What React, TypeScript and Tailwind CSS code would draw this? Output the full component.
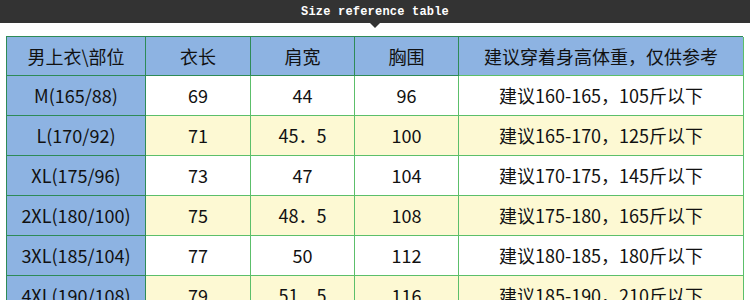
import React from 'react';

const rows = [
  { size: 'M(165/88)', len: '69', shoulder: '44', chest: '96', tip: '建议160-165，105斤以下' },
  { size: 'L(170/92)', len: '71', shoulder: '45．5', chest: '100', tip: '建议165-170，125斤以下' },
  { size: 'XL(175/96)', len: '73', shoulder: '47', chest: '104', tip: '建议170-175，145斤以下' },
  { size: '2XL(180/100)', len: '75', shoulder: '48．5', chest: '108', tip: '建议175-180，165斤以下' },
  { size: '3XL(185/104)', len: '77', shoulder: '50', chest: '112', tip: '建议180-185，180斤以下' },
  { size: '4XL(190/108)', len: '79', shoulder: '51．5', chest: '116', tip: '建议185-190，210斤以下' },
];

const headers = ['衣长', '肩宽', '胸围', '建议穿着身高体重，仅供参考'];

export default function App() {
  return (
    <div className="h-[300px] w-[750px] overflow-hidden bg-white font-['Noto_Sans_CJK_SC','Noto_Sans',sans-serif]">
      {/* Top bar */}
      <div className="relative flex h-[23px] items-center justify-center bg-[#333333]">
        <span className="font-['Liberation_Mono',monospace] text-[12px] font-bold tracking-[0.2px] text-white">
          Size reference table
        </span>
        <div className="absolute left-[370px] top-[23px] h-0 w-0 border-x-[5px] border-t-[5px] border-x-transparent border-t-[#333333]" />
      </div>

      {/* Table */}
      <div className="ml-[6px] mt-[13px] grid w-[737px] grid-cols-[139px_105px_104px_104px_285px] border-l border-t border-[#2e8b57] text-[18px] text-[#111]">
        <div className="flex h-[39px] items-center justify-center border-b border-r border-[#2e8b57] bg-[#8db3e2]">
          男上衣\部位
        </div>
        {headers.map((h, i) => (
          <div
            key={h}
            className={`flex h-[39px] items-center justify-center border-b border-r bg-[#8db3e2] ${
              i === 3 ? 'border-[#5cbf6a]' : 'border-[#2e8b57]'
            }`}
          >
            {h}
          </div>
        ))}

        {rows.map((r, idx) => {
          const bg = idx % 2 === 0 ? 'bg-white' : 'bg-[#fdf9d3]';
          return (
            <React.Fragment key={r.size}>
              <div className="flex h-[40px] items-center justify-center border-b border-r border-[#2e8b57] bg-[#8db3e2]">
                {r.size}
              </div>
              <div className={`flex h-[40px] items-center justify-center border-b border-r border-[#5cbf6a] ${bg}`}>
                {r.len}
              </div>
              <div className={`flex h-[40px] items-center justify-center border-b border-r border-[#5cbf6a] ${bg}`}>
                {r.shoulder}
              </div>
              <div className={`flex h-[40px] items-center justify-center border-b border-r border-[#5cbf6a] ${bg}`}>
                {r.chest}
              </div>
              <div className={`flex h-[40px] items-center justify-center border-b border-r border-[#5cbf6a] ${bg}`}>
                {r.tip}
              </div>
            </React.Fragment>
          );
        })}
      </div>
    </div>
  );
}
